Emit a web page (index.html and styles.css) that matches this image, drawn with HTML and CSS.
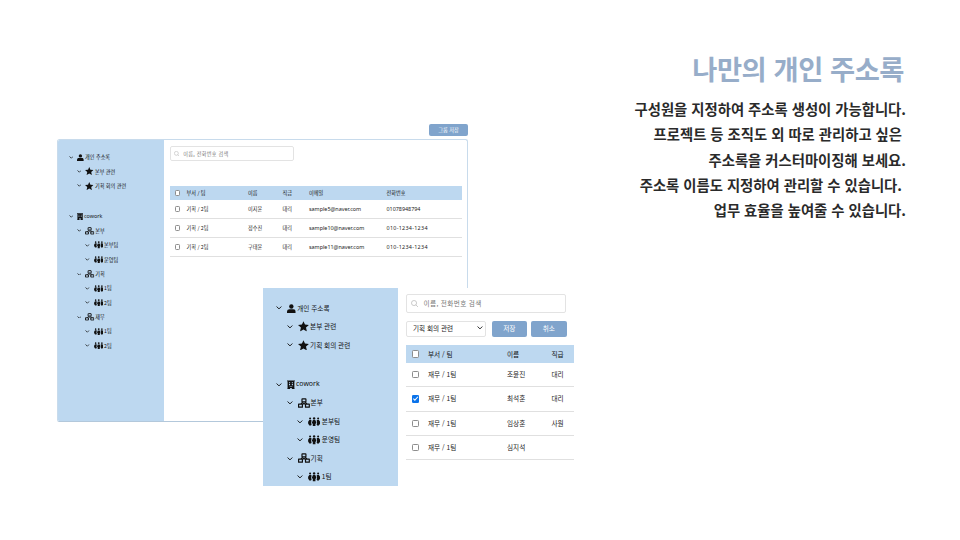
FILE: index.html
```html
<!DOCTYPE html>
<html lang="ko">
<head>
<meta charset="utf-8">
<title>나만의 개인 주소록</title>
<link rel="stylesheet" href="styles.css">
</head>
<body>
<svg class="defs" aria-hidden="true">
  <symbol id="chev" viewBox="0 0 10 6"><path d="M1 .8 5 4.8 9 .8" fill="none" stroke="currentColor" stroke-width="1.600"/></symbol>
  <symbol id="user" viewBox="0 0 16 16"><circle cx="8" cy="4" r="4"/><path d="M0 16v-2.500C0 10.500 2.200 9 4.500 9h7c2.300 0 4.500 1.500 4.500 4.500V16z"/></symbol>
  <symbol id="star" viewBox="0 0 18 17"><path d="m9 0 2.500 5.600 6.500.7-4.800 4.200 1.400 6.500L9 13.700 3.400 17l1.400-6.500L0 6.300l6.500-.7z"/></symbol>
  <symbol id="building" viewBox="0 0 14 16"><path fill-rule="evenodd" d="M0 0h14v1.500h-1V14.500h1V16H8.500v-2.500h-3V16H0v-1.500h1V1.500H0zM3.500 3v1.800h2V3zm5 0v1.800h2V3zm-5 3.500v1.800h2V6.500zm5 0v1.800h2V6.500zM4.500 10.500v1h5v-1z"/></symbol>
  <symbol id="org" viewBox="0 0 20 16"><rect x="6.700" y="1" width="6.600" height="5.200" rx=".6" fill="none" stroke="currentColor" stroke-width="2"/><path d="M1 10h6.400v5H1zM12.600 10H19v5h-6.400zM8 6.500 4.500 10M12 6.500l3.500 3.500M7.500 10.500 10 8.500l2.500 2" fill="none" stroke="currentColor" stroke-width="2" stroke-linejoin="round"/></symbol>
  <symbol id="team" viewBox="0 0 20 16"><circle cx="3.300" cy="2.500" r="1.700"/><circle cx="10" cy="2.300" r="2"/><circle cx="16.700" cy="2.500" r="1.700"/><path d="M2 5h2.800l1 1-.8 4 .9 2-1 2H2L0 11V8zM18 5h-2.800l-1 1 .8 4-.9 2 1 2H18l2-3V8zM8 5.200h4l1.800 4.300-1.600 2V16H7.800v-4.500l-1.600-2z"/></symbol>
  <symbol id="search" viewBox="0 0 12 12"><circle cx="5" cy="5" r="4.200" fill="none" stroke="currentColor"/><path d="m8 8 3.500 3.500" stroke="currentColor"/></symbol>
</svg>
<main class="slide">
  <section class="back">
    <div class="toolbar"><button class="btn">그룹 저장</button></div>
    <div class="window">
      <nav class="tree">
        <div class="node"><svg class="chev"><use href="#chev"/></svg><svg class="ic user"><use href="#user"/></svg><span>개인 주소록</span></div>
        <div class="node l2"><svg class="chev"><use href="#chev"/></svg><svg class="ic star"><use href="#star"/></svg><span>본부 관련</span></div>
        <div class="node l2"><svg class="chev"><use href="#chev"/></svg><svg class="ic star"><use href="#star"/></svg><span>기획 회의 관련</span></div>
        <div class="node root"><svg class="chev"><use href="#chev"/></svg><svg class="ic building"><use href="#building"/></svg><span class="latin">cowork</span></div>
        <div class="node l2"><svg class="chev"><use href="#chev"/></svg><svg class="ic org"><use href="#org"/></svg><span>본부</span></div>
        <div class="node l3"><svg class="chev"><use href="#chev"/></svg><svg class="ic team"><use href="#team"/></svg><span>본부팀</span></div>
        <div class="node l3"><svg class="chev"><use href="#chev"/></svg><svg class="ic team"><use href="#team"/></svg><span>운영팀</span></div>
        <div class="node l2"><svg class="chev"><use href="#chev"/></svg><svg class="ic org"><use href="#org"/></svg><span>기획</span></div>
        <div class="node l3"><svg class="chev"><use href="#chev"/></svg><svg class="ic team"><use href="#team"/></svg><span>1팀</span></div>
        <div class="node l3"><svg class="chev"><use href="#chev"/></svg><svg class="ic team"><use href="#team"/></svg><span>2팀</span></div>
        <div class="node l2"><svg class="chev"><use href="#chev"/></svg><svg class="ic org"><use href="#org"/></svg><span>재무</span></div>
        <div class="node l3"><svg class="chev"><use href="#chev"/></svg><svg class="ic team"><use href="#team"/></svg><span>1팀</span></div>
        <div class="node l3"><svg class="chev"><use href="#chev"/></svg><svg class="ic team"><use href="#team"/></svg><span>2팀</span></div>
      </nav>
      <div class="content">
        <div class="search"><svg><use href="#search"/></svg><span>이름, 전화번호 검색</span></div>
        <div class="table">
          <div class="row head"><i class="box"></i><span>부서 / 팀</span><span>이름</span><span>직급</span><span>이메일</span><span>전화번호</span></div>
          <div class="row"><i class="box"></i><span>기획 / 2팀</span><span>이지윤</span><span>대리</span><span class="latin">sample5@naver.com</span><span class="latin">01078948794</span></div>
          <div class="row"><i class="box"></i><span>기획 / 2팀</span><span>정수진</span><span>대리</span><span class="latin">sample10@naver.com</span><span class="latin phone">010-1234-1234</span></div>
          <div class="row"><i class="box"></i><span>기획 / 2팀</span><span>구태윤</span><span>대리</span><span class="latin">sample11@naver.com</span><span class="latin phone">010-1234-1234</span></div>
        </div>
      </div>
    </div>
  </section>

  <section class="front">
    <nav class="tree">
      <div class="node"><svg class="chev"><use href="#chev"/></svg><svg class="ic user"><use href="#user"/></svg><span>개인 주소록</span></div>
      <div class="node l2"><svg class="chev"><use href="#chev"/></svg><svg class="ic star"><use href="#star"/></svg><span>본부 관련</span></div>
      <div class="node l2"><svg class="chev"><use href="#chev"/></svg><svg class="ic star"><use href="#star"/></svg><span>기획 회의 관련</span></div>
      <div class="node root"><svg class="chev"><use href="#chev"/></svg><svg class="ic building"><use href="#building"/></svg><span class="latin">cowork</span></div>
      <div class="node l2"><svg class="chev"><use href="#chev"/></svg><svg class="ic org"><use href="#org"/></svg><span>본부</span></div>
      <div class="node l3"><svg class="chev"><use href="#chev"/></svg><svg class="ic team"><use href="#team"/></svg><span>본부팀</span></div>
      <div class="node l3"><svg class="chev"><use href="#chev"/></svg><svg class="ic team"><use href="#team"/></svg><span>운영팀</span></div>
      <div class="node l2"><svg class="chev"><use href="#chev"/></svg><svg class="ic org"><use href="#org"/></svg><span>기획</span></div>
      <div class="node l3"><svg class="chev"><use href="#chev"/></svg><svg class="ic team"><use href="#team"/></svg><span>1팀</span></div>
    </nav>
    <div class="content">
      <div class="search"><svg><use href="#search"/></svg><span>이름, 전화번호 검색</span></div>
      <div class="controls">
        <div class="select"><span>기획 회의 관련</span><svg class="chev"><use href="#chev"/></svg></div>
        <button class="btn">저장</button><button class="btn">취소</button>
      </div>
      <div class="table">
        <div class="row head"><i class="box"></i><span>부서 / 팀</span><span>이름</span><span>직급</span></div>
        <div class="row"><i class="box"></i><span>재무 / 1팀</span><span>조윤진</span><span>대리</span></div>
        <div class="row"><i class="box on"><svg viewBox="0 0 7 7"><path d="m1.300 3.600 1.500 1.500L5.800 1.700"/></svg></i><span>재무 / 1팀</span><span>최석훈</span><span>대리</span></div>
        <div class="row"><i class="box"></i><span>재무 / 1팀</span><span>임상훈</span><span>사원</span></div>
        <div class="row"><i class="box"></i><span>재무 / 1팀</span><span>심지석</span><span></span></div>
      </div>
    </div>
  </section>

  <section class="copy">
    <h1>나만의 개인 주소록</h1>
    <p>구성원을 지정하여 주소록 생성이 가능합니다.
프로젝트 등 조직도 외 따로 관리하고 싶은 
주소록을 커스터마이징해 보세요.
주소록 이름도 지정하여 관리할 수 있습니다. 
업무 효율을 높여줄 수 있습니다.</p>
  </section>
</main>
</body>
</html>
```
FILE: styles.css
```css
* { box-sizing: border-box; }
body {
  margin: 0;
  background: #fff;
  color: #222;
  font-family: "Noto Sans CJK KR", "Noto Sans", sans-serif;
}
.defs { position: absolute; width: 0; height: 0; }
.slide { position: relative; width: 960px; height: 540px; overflow: hidden; }
span { white-space: nowrap; }
.node span, .row span, .search span { padding-bottom: 1px; }

/* Overlapping windows placed on the slide canvas */
.back { position: absolute; left: 57px; top: 123.500px; width: 411px; font-size: 5.150px; }
.front {
  position: absolute; left: 262.500px; top: 288px; width: 312px; height: 198px;
  display: flex; background: #fff; font-size: 6.620px;
}
.toolbar { display: flex; justify-content: flex-end; height: 15.500px; }
.window {
  display: flex; height: 283px; overflow: hidden;
  border: 1px solid #c8dbec; border-bottom-color: #b3c8db; border-radius: 2.500px;
}
.btn {
  border: 0; border-radius: 2px; padding: 0 0 1px;
  background: #80a4cc; color: #fff; font: inherit;
}
.toolbar .btn { width: 39px; height: 12px; }

/* Tree: every size follows the window's font size */
.tree { flex: none; background: #bdd8f0; color: #111; }
.back .tree { width: 105.500px; padding: 10px 0 0 10.600px; }
.front .tree { width: 135.500px; padding: 11px 0 0 13.700px; overflow: hidden; }
.node { display: flex; align-items: center; height: 2.790em; }
.l2 { padding-left: 1.600em; }
.l3 { padding-left: 3.200em; }
.root { margin-top: 3.150em; }
.chev { flex: none; width: .9em; height: .55em; margin-right: .75em; }
.ic { flex: none; fill: currentColor; margin-right: .22em; }
.user { width: 1.320em; height: 1.400em; }
.star { width: 1.650em; height: 1.600em; }
.building { width: 1.200em; height: 1.500em; margin-right: .15em; }
.org { width: 1.800em; height: 1.500em; margin-right: .15em; }
.team { width: 1.850em; height: 1.450em; margin-right: .2em; }
.latin { font-family: "Noto Sans", sans-serif; font-size: 1.050em; }
.phone { letter-spacing: .055em; }

.content { flex: none; }
.back .content { width: 292px; margin-left: 6px; padding-top: 6px; }
.front .content { width: 168px; margin-left: 8px; padding-top: 5.500px; }
.search {
  display: flex; align-items: center;
  border: 1px solid #e3e3e3; border-radius: 2px; background: #fff; color: #777;
}
.search svg { width: 1.100em; height: 1.100em; color: #aaa; margin-right: .8em; }
.search span { letter-spacing: .055em; }
.back .search { width: 124.500px; height: 15px; padding-left: 3px; }
.front .search { width: 159.500px; height: 19.500px; padding-left: 4px; }

.controls { display: flex; height: 15.500px; margin-top: 8px; }
.select {
  display: flex; align-items: center; justify-content: space-between;
  width: 79.500px; margin-right: 6px; padding: 0 2px 1px 6px;
  border: 1px solid #e3e3e3; border-radius: 2px;
}
.select .chev { margin: 0; }
.controls .btn { width: 35.500px; margin-right: 4px; }

.back .table { margin-top: 25px; }
.front .table { margin-top: 8.500px; }
.row { display: grid; align-items: center; border-bottom: 1px solid #e0e0e0; }
.back .row { grid-template-columns: 12px 61.500px 34.500px 26.500px 77.500px 1fr; padding-left: 5px; height: 19px; }
.front .row { grid-template-columns: 16px 79px 44.500px 1fr; padding-left: 6px; height: 24.300px; }
.row.head { border: 0; background: #bdd8f0; color: #111; }
.back .row.head { height: 14px; }
.front .row.head { height: 18px; }
.box {
  display: block; width: 1.080em; height: 1.080em;
  border: 1px solid #8d8d8d; border-radius: 1.300px; background: #fff;
}
.box.on { border: 0; background: #0b73ea; }
.box svg { display: block; width: 100%; height: 100%; fill: none; stroke: #fff; }

.copy { position: absolute; right: 54px; top: 47px; text-align: right; }
.copy h1 {
  margin: 0; padding-right: 2px; color: #97adc9;
  font-size: 27.300px; line-height: 42px; font-weight: 700; letter-spacing: -.45px;
}
.copy p {
  margin: 7px 0 0; color: #2a2a2a; white-space: pre;
  font-size: 14.350px; line-height: 25.250px; font-weight: 700;
}
```
